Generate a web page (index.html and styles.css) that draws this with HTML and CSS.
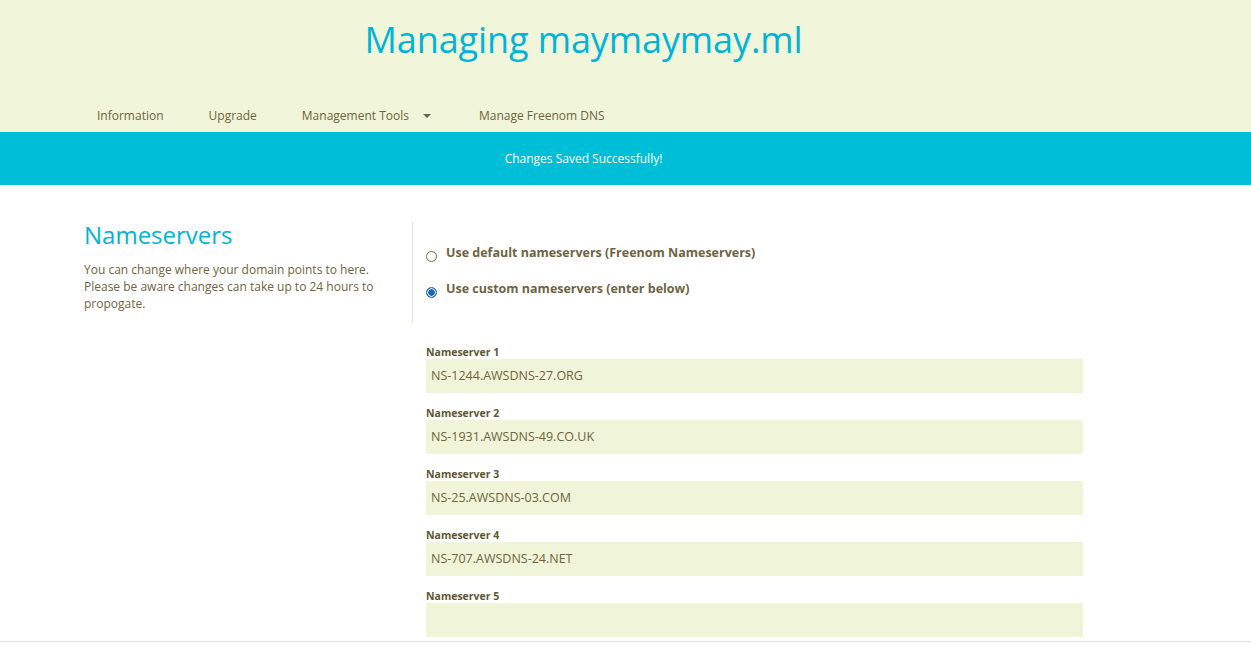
FILE: index.html
```html
<!DOCTYPE html>
<html>
<head>
<meta charset="utf-8">
<link rel="stylesheet" href="styles.css">
</head>
<body>
<header class="header">
  <div class="container">
    <h1 class="title">Managing maymaymay.ml</h1>
    <nav class="nav">
      <a class="nav-item">Information</a>
      <a class="nav-item">Upgrade</a>
      <a class="nav-item">Management Tools <span class="caret"></span></a>
      <a class="nav-item">Manage Freenom DNS</a>
    </nav>
  </div>
</header>
<div class="alert"><div class="container">Changes Saved Successfully!</div></div>
<main class="container content">
  <div class="top">
    <div class="intro">
      <h2 class="section-title">Nameservers</h2>
      <p class="desc">You can change where your domain points to here. Please be aware changes can take up to 24 hours to propogate.</p>
    </div>
    <div class="options">
      <label class="option"><span class="radio"></span>Use default nameservers (Freenom Nameservers)</label>
      <label class="option"><span class="radio checked"></span>Use custom nameservers (enter below)</label>
    </div>
  </div>
  <div class="fields">
    <div class="field"><div class="field-label">Nameserver 1</div><div class="input">NS-1244.AWSDNS-27.ORG</div></div>
    <div class="field"><div class="field-label">Nameserver 2</div><div class="input">NS-1931.AWSDNS-49.CO.UK</div></div>
    <div class="field"><div class="field-label">Nameserver 3</div><div class="input">NS-25.AWSDNS-03.COM</div></div>
    <div class="field"><div class="field-label">Nameserver 4</div><div class="input">NS-707.AWSDNS-24.NET</div></div>
    <div class="field"><div class="field-label">Nameserver 5</div><div class="input"></div></div>
  </div>
</main>
<div class="bottom-line"></div>
</body>
</html>
```
FILE: styles.css
```css
* { box-sizing: border-box; }
html, body { margin: 0; padding: 0; }
body {
  font-family: "Open Sans", "Noto Sans", sans-serif;
  color: #6e6441;
  background: #fff;
  width: 1251px;
  height: 645px;
  overflow: hidden;
  position: relative;
}
.container {
  margin-left: 84px;
  width: 999px;
}
.header {
  background: #f1f5d9;
  height: 132px;
}
.header .container { padding-top: 16px; }
.title {
  margin: 0;
  text-align: center;
  font-weight: 400;
  font-size: 36px;
  line-height: 48px;
  color: #00b4d8;
  letter-spacing: -0.1px;
}
.nav {
  display: flex;
  margin-top: 42px;
  padding-left: 13px;
}
.nav-item {
  font-size: 12px;
  line-height: 20px;
  color: #6e6441;
  margin-right: 45px;
  display: flex;
  align-items: center;
}
.caret {
  display: inline-block;
  width: 0; height: 0;
  border-left: 4px solid transparent;
  border-right: 4px solid transparent;
  border-top: 4px solid #6e6441;
  margin-left: 14px;
  margin-right: 3px;
}
.alert {
  background: #00bed7;
  color: #fff;
  height: 53px;
  line-height: 53px;
  text-align: center;
  font-size: 12px;
}
.content { padding-top: 36px; }
.top { display: flex; }
.intro { width: 328px; }
.section-title {
  margin: 0;
  font-weight: 400;
  font-size: 24px;
  line-height: 28px;
  color: #00b4d8;
}
.desc {
  margin: 12px 0 0;
  font-size: 12px;
  line-height: 17px;
  width: 310px;
}
.options {
  border-left: 1px solid #e8e6c8;
  padding: 22px 0 20px 13px;
  height: 101px;
  margin-top: 1px;
}
.option {
  display: flex;
  align-items: center;
  font-weight: 700;
  font-size: 12.5px;
  line-height: 18px;
  color: #6e6441;
  height: 18px;
  margin-bottom: 18px;
}
.radio {
  width: 11px; height: 11px;
  border-radius: 50%;
  border: 1px solid #7a6f48;
  margin-right: 9px;
  margin-top: 6px;
  background: #fff;
  flex: none;
}
.radio.checked {
  border: 1px solid #1866c7;
  background: radial-gradient(circle, #1a62c4 0 3px, #fff 3.5px 4px, #1866c7 4.5px);
}
.fields {
  margin-left: 342px;
  margin-top: 9px;
}
.field { height: 61px; padding-top: 13px; }
.field-label {
  font-size: 10.5px;
  font-weight: 700;
  line-height: 14px;
  color: #5e5732;
}
.input {
  background: #f0f4d8;
  height: 34px;
  line-height: 34px;
  padding-left: 5px;
  font-size: 12.5px;
  color: #6e6441;
}
.bottom-line {
  position: absolute;
  left: 0; right: 0;
  top: 641px;
  height: 1px;
  background: #e3e3c0;
}
```
